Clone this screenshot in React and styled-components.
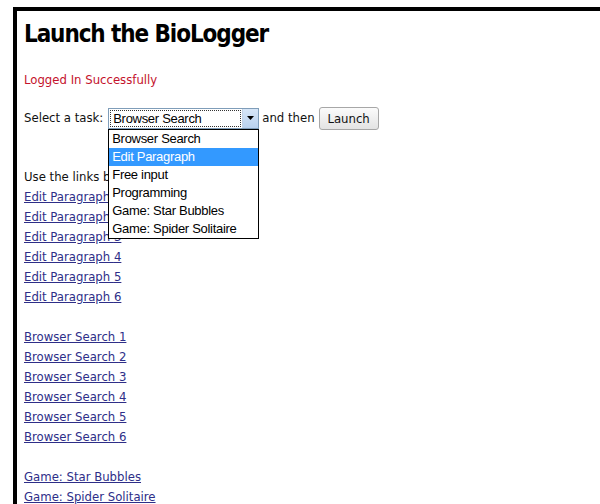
import React from "react";
import styled, { createGlobalStyle } from "styled-components";

const GlobalStyle = createGlobalStyle`
  html, body {
    margin: 0;
    padding: 0;
    background: #ffffff;
  }
  body {
    font-family: "DejaVu Sans Condensed", "DejaVu Sans", sans-serif;
    font-stretch: semi-condensed;
  }
`;

const Frame = styled.div`
  margin: 7px 0 0 13px;
  border-top: 4px solid #000;
  border-left: 4px solid #000;
  padding: 0 0 0 7px;
  min-height: 520px;
  font-size: 13px;
  color: #111;
`;

const Title = styled.h1`
  margin: 8px 0 0;
  font-size: 24px;
  line-height: 30px;
  font-weight: bold;
  letter-spacing: -1.1px;
  color: #000;
`;

const Status = styled.p`
  margin: 21px 0 0;
  line-height: 20px;
  color: #c4122c;
`;

const TaskRow = styled.div`
  margin-top: 17px;
  display: flex;
  align-items: center;
  height: 22px;
  line-height: 20px;
`;

const RowText = styled.span`
  margin-right: ${(p) => p.$gap}px;
`;

const SelectWrap = styled.div`
  position: relative;
  width: 151px;
  height: 21px;
  margin-right: 3px;
  box-sizing: border-box;
  border: 1px solid #7f9db9;
  display: flex;
  background: #fff;
  font-family: "Liberation Sans", Arial, sans-serif;
  font-stretch: normal;
`;

const SelectValue = styled.div`
  flex: 1;
  margin: 1px;
  border: 1px dotted #333;
  padding-left: 2px;
  font-size: 13px;
  line-height: 15px;
  letter-spacing: -0.3px;
  color: #000;
`;

const ArrowButton = styled.div`
  width: 15px;
  background: linear-gradient(#d7e6f7, #b9d1ee);
  border-left: 1px solid #c3d3e6;
  display: flex;
  align-items: center;
  justify-content: center;
`;

const OptionList = styled.ul`
  position: absolute;
  top: 20px;
  left: -1px;
  width: 151px;
  box-sizing: border-box;
  margin: 0;
  padding: 0;
  list-style: none;
  border: 1px solid #000;
  background: #fff;
  z-index: 2;
`;

const OptionItem = styled.li`
  height: 18px;
  line-height: 18px;
  padding-left: 3px;
  font-size: 13px;
  letter-spacing: -0.3px;
  white-space: nowrap;
  color: ${(p) => (p.$active ? "#ffffff" : "#000000")};
  background: ${(p) => (p.$active ? "#3399ff" : "transparent")};
`;

const LaunchButton = styled.button`
  width: 60px;
  height: 23px;
  padding: 0;
  border: 1px solid #a7a7a7;
  border-radius: 3px;
  background: linear-gradient(#fbfbfb, #e3e3e3);
  font-family: inherit;
  font-stretch: inherit;
  font-size: 13px;
  color: #111;
`;

const LinkBlock = styled.div`
  margin-top: 38px;
  line-height: 20px;
`;

const TaskLink = styled.a`
  display: block;
  color: #2e2e88;
  text-decoration: underline;
  width: max-content;
`;

const Spacer = styled.div`
  height: 20px;
`;

const options = [
  "Browser Search",
  "Edit Paragraph",
  "Free input",
  "Programming",
  "Game: Star Bubbles",
  "Game: Spider Solitaire",
];

export default function App() {
  return (
    <>
      <GlobalStyle />
      <Frame>
        <Title>Launch the BioLogger</Title>
        <Status>Logged In Successfully</Status>
        <TaskRow>
          <RowText $gap={5}>Select a task:</RowText>
          <SelectWrap>
            <SelectValue>Browser Search</SelectValue>
            <ArrowButton>
              <svg width="7" height="4" viewBox="0 0 7 4">
                <path d="M0 0h7L3.5 4z" fill="#000" />
              </svg>
            </ArrowButton>
            <OptionList>
              {options.map((o, i) => (
                <OptionItem key={o} $active={i === 1}>
                  {o}
                </OptionItem>
              ))}
            </OptionList>
          </SelectWrap>
          <RowText $gap={4}>and then</RowText>
          <LaunchButton>Launch</LaunchButton>
        </TaskRow>
        <LinkBlock>
          <div>Use the links below:</div>
          {[1, 2, 3, 4, 5, 6].map((n) => (
            <TaskLink key={`e${n}`} href="#">Edit Paragraph {n}</TaskLink>
          ))}
          <Spacer />
          {[1, 2, 3, 4, 5, 6].map((n) => (
            <TaskLink key={`b${n}`} href="#">Browser Search {n}</TaskLink>
          ))}
          <Spacer />
          <TaskLink href="#">Game: Star Bubbles</TaskLink>
          <TaskLink href="#">Game: Spider Solitaire</TaskLink>
        </LinkBlock>
      </Frame>
    </>
  );
}
